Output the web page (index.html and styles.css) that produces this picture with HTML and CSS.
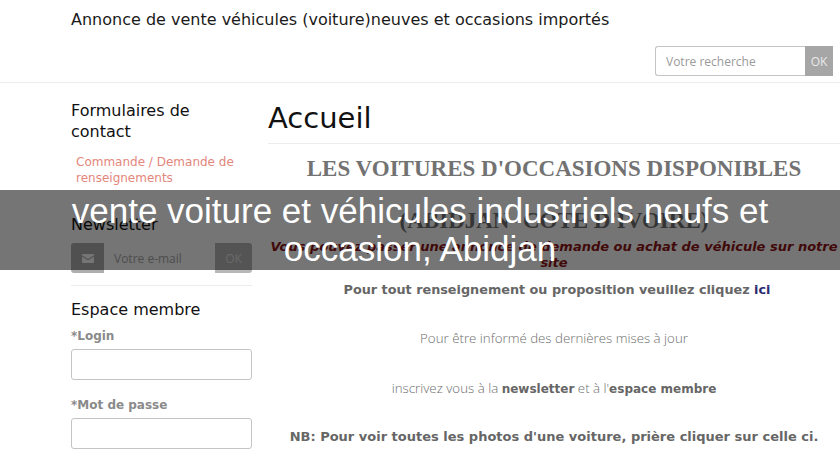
FILE: index.html
```html
<!DOCTYPE html>
<html lang="fr">
<head>
<meta charset="utf-8">
<title>Annonce de vente véhicules</title>
<link rel="stylesheet" href="styles.css">
</head>
<body>
<header class="site-header">
  <h1 class="site-title">Annonce de vente véhicules (voiture)neuves et occasions importés</h1>
  <form class="search">
    <input class="search-input" type="text" placeholder="Votre recherche">
    <button class="search-btn" type="button">OK</button>
  </form>
</header>

<div class="layout">
  <aside class="sidebar">
    <h3 class="side-title">Formulaires de contact</h3>
    <a class="side-link" href="#">Commande / Demande de renseignements</a>

    <h3 class="side-title news-title">Newsletter</h3>
    <div class="news-group">
      <span class="news-icon">
        <svg width="12" height="9" viewBox="0 0 12 9"><path d="M0 0h12v1.2L6 5 0 1.2z" fill="#fff"/><path d="M0 2.4l6 3.8 6-3.8V9H0z" fill="#fff"/></svg>
      </span>
      <input class="news-input" type="text" placeholder="Votre e-mail">
      <button class="news-btn" type="button">OK</button>
    </div>

    <div class="member">
      <h3 class="side-title member-title">Espace membre</h3>
      <label class="field-label">*Login</label>
      <input class="field" type="text">
      <label class="field-label label-pass">*Mot de passe</label>
      <input class="field" type="password">
    </div>
  </aside>

  <main class="content">
    <h2 class="page-title">Accueil</h2>
    <p class="serif-title">LES VOITURES D'OCCASIONS DISPONIBLES</p>
    <p class="serif-title serif-sub">(ABIDJAN- COTE D'IVOIRE)</p>
    <p class="red-note">Vous pouvez passer une annonce de demande ou achat de véhicule sur notre site</p>
    <p class="bold-line line-ici">Pour tout renseignement ou proposition veuillez cliquez <a class="ici" href="#">ici</a></p>
    <p class="light-line line-info">Pour être informé des dernières mises à jour</p>
    <p class="light-line line-inscr">inscrivez vous à la <b class="strong">newsletter</b> et à l'<b class="strong">espace membre</b></p>
    <p class="bold-line line-nb">NB: Pour voir toutes les photos d'une voiture, prière cliquer sur celle ci.</p>
  </main>
</div>

<div class="overlay">vente voiture et véhicules industriels neufs et occasion, Abidjan</div>
</body>
</html>
```

FILE: styles.css
```css
html, body {
  margin: 0;
  padding: 0;
  overflow: hidden;
  background: #fff;
}
body {
  font-family: "DejaVu Sans", sans-serif;
  color: #111;
  width: 840px;
  height: 460px;
  position: relative;
}

.site-header {
  padding: 10px 7px 6px 71px;
  border-bottom: 1px solid #ececec;
}
.site-title {
  margin: 0;
  font-size: 16px;
  line-height: 20px;
  font-weight: normal;
  color: #1a1a1a;
}
.search {
  display: flex;
  justify-content: flex-end;
  margin: 16px 0 0 0;
}
.search-input {
  box-sizing: border-box;
  width: 150px;
  height: 30px;
  border: 1px solid #c4c4c4;
  border-right: none;
  border-radius: 3px 0 0 3px;
  padding: 0 10px;
  font-family: "Open Sans", sans-serif;
  font-size: 12px;
  outline: none;
}
.search-input::placeholder { color: #9a9a9a; }
.search-btn {
  width: 28px;
  height: 30px;
  border: none;
  background: #a6a6a6;
  color: #e9e9e9;
  font-family: "Open Sans", sans-serif;
  font-size: 12px;
  padding: 0;
}

.layout {
  display: grid;
  grid-template-columns: 181px 572px;
  column-gap: 16px;
  padding-left: 71px;
  padding-top: 17px;
}

.side-title {
  margin: 0;
  font-size: 16px;
  line-height: 21px;
  font-weight: normal;
  color: #111;
}
.side-link {
  display: block;
  margin: 12px 0 0 5px;
  font-size: 12px;
  line-height: 16px;
  color: #e3867c;
  text-decoration: none;
}
.news-title { margin-top: 28px; }
.news-group {
  display: flex;
  height: 30px;
  margin-top: 8px;
  border-radius: 3px;
  overflow: hidden;
}
.news-icon {
  width: 33px;
  background: #aeaeae;
  display: flex;
  align-items: center;
  justify-content: center;
}
.news-input {
  box-sizing: border-box;
  width: 111px;
  height: 30px;
  border: none;
  padding: 0 10px;
  font-family: "Open Sans", sans-serif;
  font-size: 12px;
  outline: none;
}
.news-input::placeholder { color: #a8a8a8; }
.news-btn {
  width: 37px;
  border: none;
  background: #b8b8b8;
  color: #e4e4e4;
  font-family: "Open Sans", sans-serif;
  font-size: 12px;
  padding: 0;
}

.member {
  margin-top: 12px;
  border-top: 1px solid #ececec;
  display: flex;
  flex-direction: column;
}
.member-title { margin-top: 13px; }
.field-label {
  margin-top: 8px;
  font-size: 12px;
  line-height: 16px;
  font-weight: bold;
  color: #8a8a8a;
}
.label-pass { margin-top: 17px; }
.field {
  box-sizing: border-box;
  margin-top: 5px;
  width: 181px;
  height: 31px;
  border: 1px solid #c4c4c4;
  border-radius: 3px;
  outline: none;
}

.content {
  text-align: center;
}
.page-title {
  margin: 1px 0 0 0;
  font-size: 29px;
  line-height: 34px;
  font-weight: normal;
  text-align: left;
  color: #111;
  padding-bottom: 8px;
  border-bottom: 1px solid #ececec;
}
.serif-title {
  margin: 12px 0 0 0;
  font-family: "Liberation Serif", serif;
  font-weight: bold;
  font-size: 23px;
  line-height: 26px;
  color: #727272;
}
.serif-sub { margin-top: 26px; }
.red-note {
  margin: 5px 0 0 0;
  font-size: 13px;
  line-height: 16px;
  font-weight: bold;
  font-style: italic;
  color: #8e1414;
}
.bold-line {
  margin: 0;
  font-size: 13px;
  line-height: 16px;
  font-weight: bold;
  color: #666;
}
.line-ici { margin-top: 11px; font-size: 12.8px; padding-left: 6px; }
.ici { color: #2b2b6e; text-decoration: none; }
.light-line {
  margin: 0;
  font-family: "Open Sans", sans-serif;
  font-weight: 300;
  font-size: 13.3px;
  line-height: 16px;
  color: #6e6e6e;
}
.line-info { margin-top: 32px; }
.line-inscr { margin-top: 34px; }
.strong {
  font-family: "DejaVu Sans", sans-serif;
  font-weight: bold;
  font-size: 12px;
  color: #666;
}
.line-nb { margin-top: 32px; }

.overlay {
  position: absolute;
  left: 0;
  top: 190px;
  width: 840px;
  height: 80px;
  box-sizing: border-box;
  padding: 2px 10px 0 10px;
  background: rgba(0, 0, 0, 0.54);
  color: #fff;
  font-family: "Liberation Sans", Arial, sans-serif;
  font-size: 35px;
  line-height: 38px;
  text-align: center;
}
```
